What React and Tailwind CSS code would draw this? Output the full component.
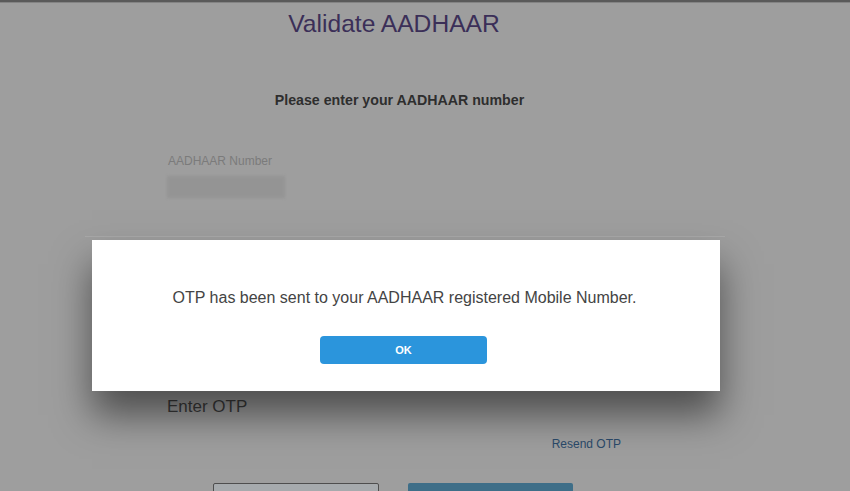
export default function App() {
  return (
    <div className="relative w-[850px] h-[491px] overflow-hidden bg-[#9e9e9e] font-['Liberation_Sans',Arial,sans-serif]">
      <div className="h-[2px] bg-[#5a5a5a]" />
      <div className="h-[1px] bg-[#848484]" />
      <div className="ml-[167px] w-[454px] flex flex-col">
        <h1 className="mt-[4px] h-[34px] leading-[34px] text-[24.6px] text-center text-[#3b2f58] font-normal">
          Validate AADHAAR
        </h1>
        <p className="mt-[49px] h-[20px] leading-[20px] text-[14.2px] font-bold text-center text-[#2e2e2e] pl-[11px]">
          Please enter your AADHAAR number
        </p>
        <label className="mt-[43px] h-[16px] leading-[16px] text-[12px] text-[#7b7b7b] pl-[1px]">
          AADHAAR Number
        </label>
        <div className="mt-[7px] w-[118px] h-[22px] bg-[#949494] blur-[1.5px]" />
        <div className="mt-[38px] -ml-[82px] w-[640px] h-[1px] bg-[#a9a9a9]" />
        <div className="mt-[158px] h-[24px] leading-[24px] text-[17px] text-[#3c3c3c]">
          Enter OTP
        </div>
        <div className="mt-[17px] h-[16px] leading-[16px] text-[12px] text-[#2b4a6a] text-right">
          Resend OTP
        </div>
        <div className="mt-[31px] flex justify-center gap-[29px] pr-[3px]">
          <div className="w-[166px] h-[34px] border border-[#4e4e4e] bg-[#a6aaad] rounded-[2px]" />
          <div className="w-[165px] h-[34px] bg-[#3e6e88] rounded-[2px]" />
        </div>
      </div>

      <div className="absolute left-[92px] top-[240px] w-[628px] h-[151px] bg-white shadow-[0_24px_36px_rgba(0,0,0,0.5)] flex flex-col items-center">
        <p className="mt-[48px] h-[20px] leading-[20px] text-[16px] text-[#444444] pr-[3px]">
          OTP has been sent to your AADHAAR registered Mobile Number.
        </p>
        <button className="mt-[28px] w-[167px] h-[28px] rounded-[4px] bg-[#2b95dc] text-white text-[11px] font-bold mr-[5px]">
          OK
        </button>
      </div>
    </div>
  );
}
